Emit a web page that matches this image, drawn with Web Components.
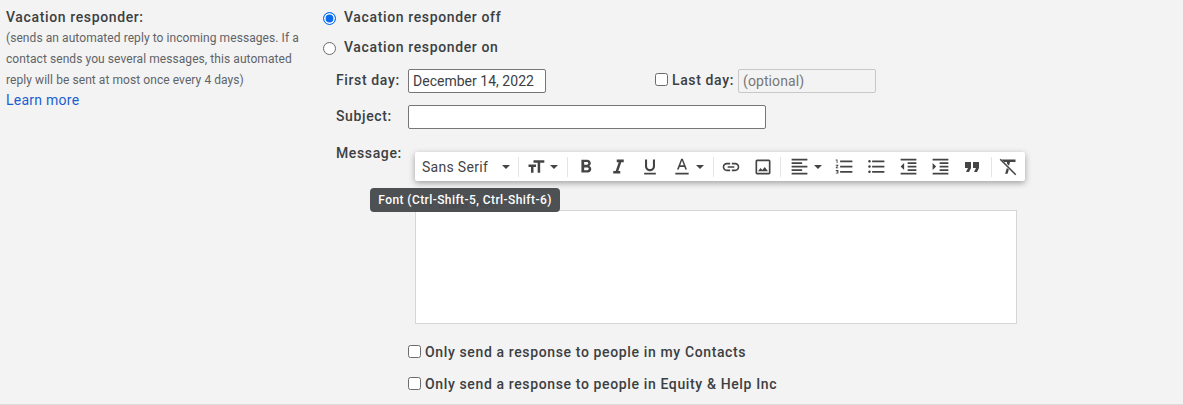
<!DOCTYPE html>
<html><head><meta charset="utf-8">
<style>
html,body{margin:0;padding:0;background:#f3f3f3}
body{font-family:Roboto,"Liberation Sans",sans-serif;color:#3c4043;overflow:hidden;height:405px}
</style></head><body>
<vac-settings>
  <vac-help slot="side" title-text="Vacation responder:">(sends an automated reply to incoming messages. If a contact sends you several messages, this automated reply will be sent at most once every 4 days)</vac-help>

  <vac-radio checked>Vacation responder off</vac-radio>
  <vac-radio style="margin-top:12px">Vacation responder on</vac-radio>
  <vac-dates></vac-dates>
  <vac-subject></vac-subject>
  <vac-message></vac-message>
  <vac-check style="margin:19px 0 0 85px">Only send a response to people in my Contacts</vac-check>
  <vac-check style="margin:14px 0 0 85px">Only send a response to people in Equity &amp; Help Inc</vac-check>
</vac-settings>
<script>
const label='font:500 14px/18px Roboto,"Liberation Sans",sans-serif;letter-spacing:.63px;color:#3c4043;';
function el(name,html,setup){
  customElements.define(name,class extends HTMLElement{
    constructor(){super();this.attachShadow({mode:'open'}).innerHTML=typeof html==='function'?html(this):html;}
    connectedCallback(){if(setup)setup(this);}
  });
}
el('vac-settings',`<style>
:host{display:grid;grid-template-columns:323px 1fr;height:404px;border-bottom:1px solid #dcdcdc;box-sizing:content-box}
.side{padding:8px 0 0 6px}
.main{display:flex;flex-direction:column;padding-top:8px;min-width:0}
</style><div class="side"><slot name="side"></slot></div><div class="main"><slot></slot></div>`);

el('vac-help',`<style>
:host{display:block;width:300px}
b{display:block;${label}}
p{margin:2px 0 0;font:400 12px/21px Roboto,"Liberation Sans",sans-serif;letter-spacing:.07px;color:#5f6368}
a{display:block;margin-top:-1px;font:400 14px/21px Roboto,"Liberation Sans",sans-serif;letter-spacing:.26px;color:#1a5fd0;text-decoration:none}
</style><b></b><p><slot></slot></p><a href="#">Learn more</a>`,h=>{h.shadowRoot.querySelector('b').textContent=h.getAttribute('title-text');});

const radioCss=`:host{display:flex;align-items:center;height:18px;${label}}
i{box-sizing:border-box;width:13px;height:13px;border-radius:50%;border:1px solid #6b6b6b;background:#fff;margin-right:8px;flex:none;position:relative;top:1px}
i.on{border:1.6px solid #0b6cf0;box-shadow:inset 0 0 0 1.6px #fff;background:#0b6cf0}`;
el('vac-radio',h=>`<style>${radioCss}</style><i class="${h.hasAttribute('checked')?'on':''}"></i><slot></slot>`);

const boxCss=`.cb{box-sizing:border-box;display:inline-block;width:13px;height:13px;border:1px solid #6b6b6b;border-radius:2.5px;background:#fff;flex:none}`;
el('vac-check',`<style>${boxCss}:host{display:flex;align-items:center;height:18px;${label}}
.cb{margin-right:4px;position:relative;top:-1px}</style><span class="cb"></span><slot></slot>`);

const inputCss=`.inp{box-sizing:border-box;display:flex;align-items:center;height:24px;background:#fff;border:1px solid #767676;border-radius:2px;padding:0 4px;font:400 14px Roboto,"Liberation Sans",sans-serif;letter-spacing:.02px;color:#3c4043}`;
el('vac-dates',`<style>${boxCss}${inputCss}
:host{display:flex;align-items:center;height:24px;margin-top:13px;padding-left:13px;${label}}
.first{width:72px;margin-top:-2px}
.d{width:138px}
.cb{margin:0 4px 0 109px;position:relative;top:-2px}
.l{width:66px;margin-top:-2px}
.o{width:138px;background:#f3f3f3;border-color:#c8c8c8;color:#777;letter-spacing:.1px}
</style><span class="first">First day:</span><span class="inp d">December 14, 2022</span><span class="cb"></span><span class="l">Last day:</span><span class="inp o">(optional)</span>`);
el('vac-subject',`<style>${inputCss}
:host{display:flex;align-items:center;height:24px;margin-top:12px;padding-left:13px;${label}}
.s{width:72px;margin-top:-2px}.inp{width:358px}</style><span class="s">Subject:</span><span class="inp"></span>`);

const P={
bold:'M15.6 10.79c.97-.67 1.65-1.77 1.65-2.79 0-2.26-1.75-4-4-4H7v14h7.04c2.09 0 3.71-1.7 3.71-3.79 0-1.52-.86-2.82-2.15-3.42zM10 6.5h3c.83 0 1.5.67 1.5 1.5s-.67 1.5-1.5 1.5h-3v-3zm3.5 9H10v-3h3.5c.83 0 1.5.67 1.5 1.5s-.67 1.5-1.5 1.5z',
italic:'M10 4v3h2.21l-3.42 10H6v3h8v-3h-2.21l3.42-10H18V4z',
under:'M12 17c3.31 0 6-2.69 6-6V3h-2.5v8c0 1.93-1.57 3.5-3.5 3.5S8.5 12.93 8.5 11V3H6v8c0 3.31 2.69 6 6 6zm-7 2v2h14v-2H5z',
color:'M11 2L6 15h2.1l1.1-3h5.6l1.1 3H18L13 2h-2zm-1.1 8L12 4.3 14.1 10H9.9zM4 19h16v2H4z',
link:'M3.9 12c0-1.71 1.39-3.1 3.1-3.1h4V7H7c-2.76 0-5 2.24-5 5s2.24 5 5 5h4v-1.9H7c-1.71 0-3.1-1.39-3.1-3.1zM8 13h8v-2H8v2zm9-6h-4v1.9h4c1.71 0 3.1 1.39 3.1 3.1s-1.39 3.1-3.1 3.1h-4V17h4c2.76 0 5-2.24 5-5s-2.24-5-5-5z',
image:'M19 5v14H5V5h14m0-2H5c-1.1 0-2 .9-2 2v14c0 1.1.9 2 2 2h14c1.1 0 2-.9 2-2V5c0-1.1-.9-2-2-2zm-4.86 8.86l-3 3.87L9 13.14 6 17h12l-3.86-5.14z',
align:'M15 15H3v2h12v-2zm0-8H3v2h12V7zM3 13h18v-2H3v2zm0 8h18v-2H3v2zM3 3v2h18V3H3z',
num:'M2 17h2v.5H3v1h1v.5H2v1h3v-4H2v1zm1-9h1V4H2v1h1v3zm-1 3h1.8L2 13.1v.9h3v-1H3.2L5 10.9V10H2v1zm5-6v2h14V5H7zm0 14h14v-2H7v2zm0-6h14v-2H7v2z',
bul:'M4 10.5c-.83 0-1.5.67-1.5 1.5s.67 1.5 1.5 1.5 1.5-.67 1.5-1.5-.67-1.5-1.5-1.5zm0-6c-.83 0-1.5.67-1.5 1.5S3.17 7.5 4 7.5 5.5 6.83 5.5 6 4.83 4.5 4 4.5zm0 12c-.83 0-1.5.68-1.5 1.5s.68 1.5 1.5 1.5 1.5-.68 1.5-1.5-.67-1.5-1.5-1.5zM7 19h14v-2H7v2zm0-6h14v-2H7v2zm0-8v2h14V5H7z',
dec:'M11 17h10v-2H11v2zm-8-5l4 4V8l-4 4zm0 9h18v-2H3v2zM3 3v2h18V3H3zm8 6h10V7H11v2zm0 4h10v-2H11v2z',
inc:'M3 21h18v-2H3v2zM3 8v8l4-4-4-4zm8 9h10v-2H11v2zM3 3v2h18V3H3zm8 6h10V7H11v2zm0 4h10v-2H11v2z',
quote:'M6 17h3l2-4V7H5v6h3zm8 0h3l2-4V7h-6v6h3z',
clear:'M4 3h17v3h-6.5l-1.3 4.5-2.4-2.4L10.6 6H7zM10.6 13.2L8.5 20h3l1.5-5zM3.3 2L2 3.3 20.7 22l1.3-1.3z',
size:'M9 4v3h5v12h3V7h5V4H9zm-6 8h3v7h3v-7h3V9H3v3z'
};
el('vac-btn',h=>{
  const n=h.getAttribute('icon'),pad=h.getAttribute('pad'),s=h.getAttribute('size')||20;
  return `<style>:host{display:flex;align-items:center;justify-content:${pad?'flex-start':'center'};height:28px;width:${pad?47:32}px;flex:none;padding-left:${pad||0}px;box-sizing:border-box}
  svg{width:${s}px;height:${s}px;fill:#444;display:block;flex:none}
  i{width:0;height:0;border:4px solid transparent;border-top:4px solid #444;border-bottom:0;margin-left:4px}</style>
  <svg viewBox="0 0 24 24"><path d="${P[n]}"/></svg>${pad?'<i></i>':''}`;
});
el('vac-toolbar',`<style>
:host{display:flex;align-items:center;width:610px;height:29px;background:#fff;border-radius:2px;box-shadow:0 2px 6px rgba(0,0,0,.35)}
.font{display:flex;align-items:center;width:103px;box-sizing:border-box;padding-left:7px;font:400 14px Roboto,"Liberation Sans",sans-serif;letter-spacing:.3px;color:#444;flex:none}
.font span{width:80px}
.font i{width:0;height:0;border:4px solid transparent;border-top:4px solid #444;border-bottom:0}
s{display:block;width:1px;height:20px;background:#e4e4e4;flex:none}
</style>
<div class="font"><span>Sans Serif</span><i></i></div><s></s>
<vac-btn icon="size" pad="7"></vac-btn><s style="margin:0 2px 0 1px"></s>
<vac-btn icon="bold" size="22"></vac-btn><vac-btn icon="italic" size="21"></vac-btn><vac-btn icon="under"></vac-btn><vac-btn icon="color" pad="6" size="20"></vac-btn><s></s>
<span style="width:1px"></span><vac-btn icon="link"></vac-btn><vac-btn icon="image"></vac-btn><span style="width:1px"></span><s></s>
<vac-btn icon="align" pad="8" size="21"></vac-btn><vac-btn icon="num" size="21"></vac-btn><vac-btn icon="bul" size="21"></vac-btn><vac-btn icon="dec" size="21"></vac-btn><vac-btn icon="inc" size="21"></vac-btn><vac-btn icon="quote" size="24"></vac-btn>
<span style="width:3px"></span><s></s><vac-btn icon="clear"></vac-btn>`);
el('vac-tooltip',`<style>
:host{position:absolute;left:-45px;top:36px;z-index:3;box-sizing:border-box;height:24px;width:190px;background:rgba(66,70,73,.94);border-radius:4px;color:#fff;font:500 12px/24px Roboto,"Liberation Sans",sans-serif;letter-spacing:.42px;text-align:center;white-space:nowrap}
</style><slot></slot>`);
el('vac-message',`<style>
:host{display:block;position:relative;margin-top:23px;padding-left:13px;${label}}
.top{display:flex;height:29px}
.l{width:79px;margin-top:-8px}
.ed{box-sizing:border-box;margin:29px 0 0 79px;width:602px;height:114px;background:#fff;border:1px solid #d6d6d6;position:relative}
.tb{position:absolute;left:92px;top:0}
.pt{position:absolute;left:12px;top:-15px;font:400 13px Roboto,"Liberation Sans",sans-serif;letter-spacing:.3px;color:#888}
.t{position:absolute;left:92px;top:0}
</style>
<div class="top"><span class="l">Message:</span></div>
<div class="ed"><span class="pt">« Plain Text</span></div>
<vac-toolbar class="tb"></vac-toolbar>
<div class="t"><vac-tooltip>Font (Ctrl-Shift-5, Ctrl-Shift-6)</vac-tooltip></div>`);
</script>
</body></html>
